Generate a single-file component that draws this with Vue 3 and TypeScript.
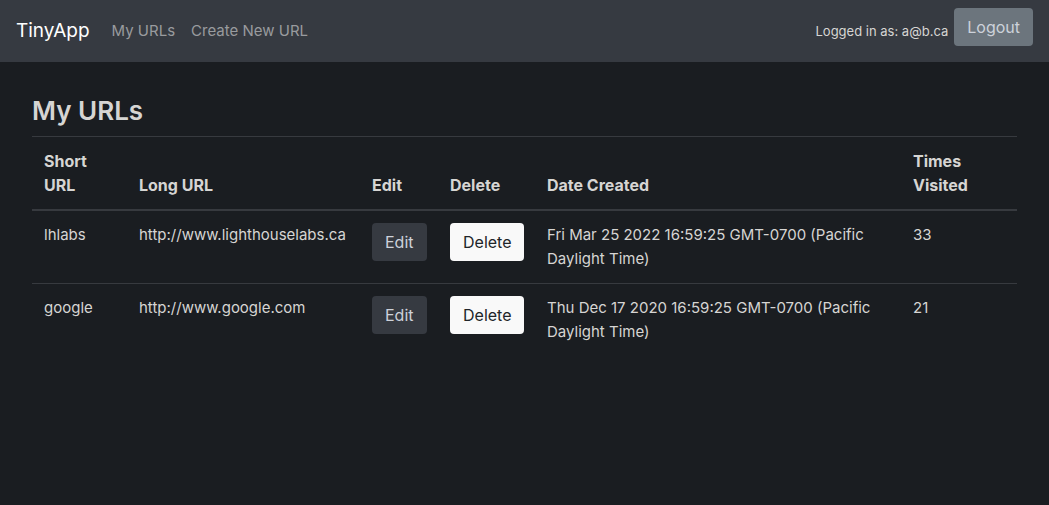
<script setup lang="ts">
interface UrlEntry {
  id: string
  longUrl: string
  created: string
  visits: number
}

const email = 'a@b.ca'

const urls: UrlEntry[] = [
  {
    id: 'lhlabs',
    longUrl: 'http://www.lighthouselabs.ca',
    created: 'Fri Mar 25 2022 16:59:25 GMT-0700 (Pacific Daylight Time)',
    visits: 33,
  },
  {
    id: 'google',
    longUrl: 'http://www.google.com',
    created: 'Thu Dec 17 2020 16:59:25 GMT-0700 (Pacific Daylight Time)',
    visits: 21,
  },
]
</script>

<template>
  <header>
    <nav class="navbar">
      <a class="brand" href="#">TinyApp</a>
      <a class="nav-link" href="#urls">My URLs</a>
      <a class="nav-link" href="#new">Create New URL</a>
      <form class="session" @submit.prevent>
        <span class="user">Logged in as: {{ email }}</span>
        <button class="btn btn-secondary" type="submit">Logout</button>
      </form>
    </nav>
  </header>
  <main class="content">
    <h3 class="title">My URLs</h3>
    <table class="table">
      <colgroup>
        <col class="col-short" />
        <col class="col-long" />
        <col class="col-edit" />
        <col class="col-delete" />
        <col class="col-date" />
        <col class="col-visits" />
      </colgroup>
      <thead>
        <tr>
          <th scope="col">Short<br />URL</th>
          <th scope="col">Long URL</th>
          <th scope="col">Edit</th>
          <th scope="col">Delete</th>
          <th scope="col">Date Created</th>
          <th scope="col">Times<br />Visited</th>
        </tr>
      </thead>
      <tbody>
        <tr v-for="url in urls" :key="url.id">
          <td>{{ url.id }}</td>
          <td class="long">{{ url.longUrl }}</td>
          <td><button class="btn btn-dark" type="button">Edit</button></td>
          <td><button class="btn btn-light" type="button">Delete</button></td>
          <td>{{ url.created }}</td>
          <td>{{ url.visits }}</td>
        </tr>
      </tbody>
    </table>
  </main>
</template>

<style>
body {
  margin: 0;
  background: #1a1d21;
}
</style>

<style scoped>
.navbar,
.content {
  font-family: Inter, "Liberation Sans", sans-serif;
  font-size: 15px;
  line-height: 24px;
  color: #d6d5d3;
}

.navbar {
  display: flex;
  align-items: center;
  padding: 8px 16px;
  background: #363a41;
}

.brand {
  margin-right: 14px;
  font-size: 19px;
  line-height: 30px;
  color: #fff;
  text-decoration: none;
}

.nav-link {
  padding: 8px;
  color: #999b9e;
  text-decoration: none;
}

.session {
  display: flex;
  align-items: center;
  gap: 6px;
  margin-left: auto;
}

.session .btn {
  margin-bottom: 8px;
}

.user {
  font-size: 13px;
}

.content {
  padding: 32px;
}

.title {
  margin: 0 0 8px;
  font-size: 26px;
  font-weight: 600;
  line-height: 34px;
}

.table {
  width: 100%;
  border-collapse: collapse;
  table-layout: fixed;
}

.col-short { width: 95px; }
.col-long { width: 233px; }
.col-edit { width: 78px; }
.col-delete { width: 97px; }
.col-visits { width: 116px; }

.table th,
.table td {
  padding: 12px;
  border-top: 1px solid #373a3f;
  text-align: left;
  vertical-align: top;
}

.table th {
  border-bottom: 2px solid #373a3f;
  font-size: 16px;
  font-weight: 700;
  vertical-align: bottom;
}

.long {
  white-space: nowrap;
}

.btn {
  display: block;
  padding: 6px 12px;
  border: 1px solid transparent;
  border-radius: 4px;
  font: inherit;
  font-size: 16px;
  white-space: nowrap;
  cursor: pointer;
}

.btn-secondary {
  background: #6c757d;
  color: #cdd2da;
}

.btn-dark {
  background: #363a41;
  color: #cdd2da;
}

.btn-light {
  background: #f9f9f9;
  color: #212529;
}
</style>
